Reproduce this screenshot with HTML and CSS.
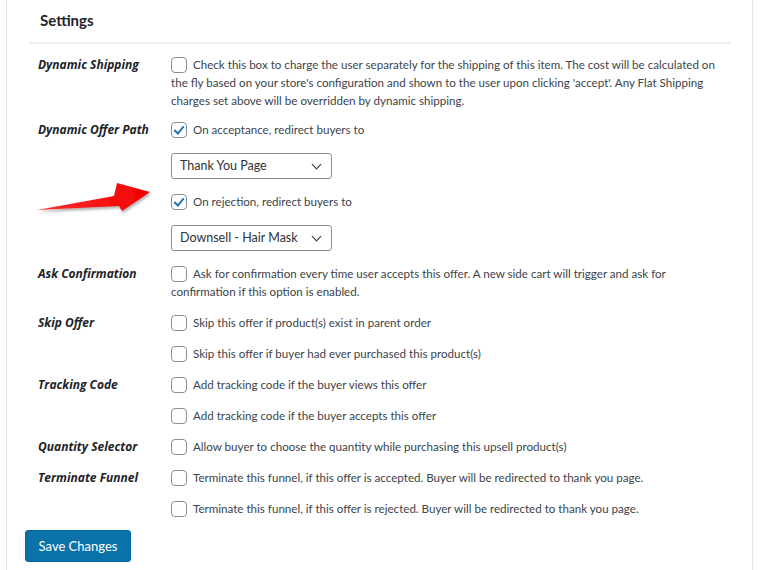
FILE: index.html
```html
<!DOCTYPE html>
<html lang="en">
<head>
    <meta charset="UTF-8">
    <title>Settings</title>
    <link rel="stylesheet" href="styles.css">
</head>
<body>
    <div class="panel">
        <h2 class="panel-title">Settings</h2>
        <div class="divider"></div>

        <div class="form-table">
            <div class="label">Dynamic Shipping</div>
            <div class="field">
                <p class="option option-long"><span class="check"></span>Check this box to charge the user separately for the shipping of this item. The cost will be calculated on the fly based on your store's configuration and shown to the user upon clicking 'accept'. Any Flat Shipping charges set above will be overridden by dynamic shipping.</p>
            </div>

            <div class="label">Dynamic Offer Path</div>
            <div class="field">
                <p class="option"><span class="check checked"></span>On acceptance, redirect buyers to</p>
                <div class="select">Thank You Page</div>
                <p class="option"><span class="check checked"></span>On rejection, redirect buyers to</p>
                <div class="select">Downsell - Hair Mask</div>
            </div>

            <div class="label">Ask Confirmation</div>
            <div class="field">
                <p class="option"><span class="check"></span>Ask for confirmation every time user accepts this offer. A new side cart will trigger and ask for confirmation if this option is enabled.</p>
            </div>

            <div class="label">Skip Offer</div>
            <div class="field">
                <p class="option"><span class="check"></span>Skip this offer if product(s) exist in parent order</p>
                <p class="option"><span class="check"></span>Skip this offer if buyer had ever purchased this product(s)</p>
            </div>

            <div class="label">Tracking Code</div>
            <div class="field">
                <p class="option"><span class="check"></span>Add tracking code if the buyer views this offer</p>
                <p class="option"><span class="check"></span>Add tracking code if the buyer accepts this offer</p>
            </div>

            <div class="label">Quantity Selector</div>
            <div class="field">
                <p class="option"><span class="check"></span>Allow buyer to choose the quantity while purchasing this upsell product(s)</p>
            </div>

            <div class="label">Terminate Funnel</div>
            <div class="field">
                <p class="option"><span class="check"></span>Terminate this funnel, if this offer is accepted. Buyer will be redirected to thank you page.</p>
                <p class="option"><span class="check"></span>Terminate this funnel, if this offer is rejected. Buyer will be redirected to thank you page.</p>
            </div>
        </div>

        <div class="actions">
            <button class="button-primary">Save Changes</button>
        </div>
    </div>

    <svg class="arrow" width="170" height="240" viewBox="0 0 170 240">
        <defs>
            <linearGradient id="arrow-fill" x1="0" y1="0" x2="1" y2="0">
                <stop offset="0" stop-color="#ff3030"/>
                <stop offset="1" stop-color="#f00000"/>
            </linearGradient>
            <filter id="arrow-shadow" x="-10%" y="-20%" width="130%" height="160%">
                <feDropShadow dx="1" dy="2" stdDeviation="1.5" flood-color="#000" flood-opacity="0.35"/>
            </filter>
        </defs>
        <path d="M37 210 L114 196 L117 183 L150 192 L122 211 L119 206 Z" fill="url(#arrow-fill)" filter="url(#arrow-shadow)"/>
    </svg>
</body>
</html>
```

FILE: styles.css
```css
body {
    margin: 0;
    background: #fff;
    font-family: Lato, "Open Sans", sans-serif;
    font-size: 11.6px;
    color: #3c434a;
}

.panel {
    margin-left: 6px;
    width: 747px;
    height: 570px;
    border-left: 1px solid #e2e4e7;
    border-right: 1px solid #e2e4e7;
    box-sizing: border-box;
    padding: 0 21px 0 0;
}

.panel-title {
    margin: 0;
    padding: 11px 0 0 33px;
    height: 42px;
    box-sizing: border-box;
    font-size: 15px;
    line-height: 18px;
    font-weight: 700;
    color: #1d2327;
}

.divider {
    margin-left: 22px;
    height: 2px;
    background: #eeeeee;
}

.form-table {
    display: grid;
    grid-template-columns: 133px 1fr;
    row-gap: 13px;
    padding: 12px 0 0 31px;
}

.label {
    font-family: "Open Sans", sans-serif;
    font-style: italic;
    font-weight: 700;
    color: #1d2327;
    line-height: 18px;
    font-size: 12px;
}

.field {
    display: flex;
    flex-direction: column;
    gap: 13px;
    align-items: flex-start;
}

.option {
    margin: 0;
    line-height: 18px;
}

.option-long {
    margin-bottom: -2px;
}

.check {
    display: inline-block;
    width: 16px;
    height: 16px;
    box-sizing: border-box;
    border: 1px solid #8c8f94;
    border-radius: 4px;
    vertical-align: -4px;
    margin-right: 6px;
    background: #fff;
    position: relative;
}

.check.checked::after {
    content: "";
    position: absolute;
    left: 4px;
    top: 1px;
    width: 4px;
    height: 8px;
    border: solid #2271b1;
    border-width: 0 2px 2px 0;
    transform: rotate(40deg);
}

.select {
    width: 161px;
    height: 26px;
    box-sizing: border-box;
    border: 1px solid #8c8f94;
    border-radius: 3px;
    padding: 0 8px;
    line-height: 24px;
    color: #2c3338;
    font-size: 12.5px;
    position: relative;
    margin: 1px 0;
}

.select::after {
    content: "";
    position: absolute;
    right: 11px;
    top: 7px;
    width: 6px;
    height: 6px;
    border: solid #2c3338;
    border-width: 0 1.5px 1.5px 0;
    transform: rotate(45deg);
}

.actions {
    padding: 12px 0 0 18px;
}

.button-primary {
    background: #0a72a9;
    border: 1px solid #07679a;
    border-radius: 3px;
    color: #fff;
    font-family: Lato, sans-serif;
    font-size: 13px;
    width: 106px;
    height: 32px;
    padding: 0;
    cursor: pointer;
}

.arrow {
    position: absolute;
    left: 0;
    top: 0;
}
```
